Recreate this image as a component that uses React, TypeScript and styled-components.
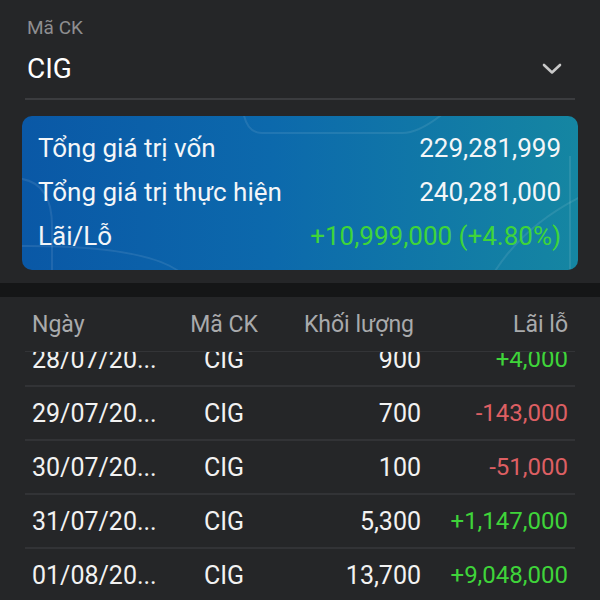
import styled, { createGlobalStyle } from 'styled-components';

const GlobalStyle = createGlobalStyle`
  html, body {
    margin: 0;
    padding: 0;
    background: #252628;
  }
  body {
    font-family: Roboto, "Noto Sans", "Liberation Sans", sans-serif;
    color: #ffffff;
  }
`;

interface Trade {
  date: string;
  code: string;
  volume: string;
  pnl: string;
}

const trades: Trade[] = [
  { date: '28/07/20...', code: 'CIG', volume: '900', pnl: '+4,000' },
  { date: '29/07/20...', code: 'CIG', volume: '700', pnl: '-143,000' },
  { date: '30/07/20...', code: 'CIG', volume: '100', pnl: '-51,000' },
  { date: '31/07/20...', code: 'CIG', volume: '5,300', pnl: '+1,147,000' },
  { date: '01/08/20...', code: 'CIG', volume: '13,700', pnl: '+9,048,000' },
];

const ChevronDown = () => (
  <svg width="20" height="12" viewBox="0 0 20 12" fill="none">
    <path
      d="M2 2 L10 9.5 L18 2"
      stroke="#c9c9c9"
      strokeWidth="2.6"
      strokeLinecap="round"
      strokeLinejoin="round"
    />
  </svg>
);

const CardPattern = () => (
  <PatternSvg viewBox="0 0 556 154" preserveAspectRatio="none">
    <g stroke="rgba(255,255,255,0.09)" strokeWidth="2" fill="none">
      <path d="M220 -20 Q220 17 240 17 L380 17 Q400 17 430 -10" />
      <path d="M-10 62 Q30 62 30 110 L30 170" />
      <path d="M-10 130 Q150 128 170 170" />
      <path d="M548 40 L548 170" />
      <path d="M470 160 Q500 110 560 80" />
    </g>
  </PatternSvg>
);

const App = () => {
  return (
    <>
      <GlobalStyle />
      <Page>
        <Picker>
          <PickerLabel>Mã CK</PickerLabel>
          <PickerRow>
            <PickerValue>CIG</PickerValue>
            <ChevronDown />
          </PickerRow>
        </Picker>

        <SummaryCard>
          <CardPattern />
          <SummaryRow>
            <span>Tổng giá trị vốn</span>
            <span>229,281,999</span>
          </SummaryRow>
          <SummaryRow>
            <span>Tổng giá trị thực hiện</span>
            <span>240,281,000</span>
          </SummaryRow>
          <SummaryRow>
            <span>Lãi/Lỗ</span>
            <Profit positive>+10,999,000 (+4.80%)</Profit>
          </SummaryRow>
        </SummaryCard>

        <Band />

        <Table>
          <HeadRow>
            <HeadCell align="left">Ngày</HeadCell>
            <HeadCell align="center">Mã CK</HeadCell>
            <HeadCell align="right" pr={7}>Khối lượng</HeadCell>
            <HeadCell align="right">Lãi lỗ</HeadCell>
          </HeadRow>
          <TableBody>
            <Rows>
              {trades.map((t) => (
                <Row key={t.date}>
                  <Cell align="left">{t.date}</Cell>
                  <Cell align="center">{t.code}</Cell>
                  <Cell align="right">{t.volume}</Cell>
                  <RowProfit positive={t.pnl.startsWith('+')}>{t.pnl}</RowProfit>
                </Row>
              ))}
            </Rows>
          </TableBody>
        </Table>
      </Page>
    </>
  );
};

const Page = styled.div`
  width: 600px;
  height: 600px;
  overflow: hidden;
  display: flex;
  flex-direction: column;
  background: #252628;
`;

const Picker = styled.div`
  margin: 0 25px;
  padding-top: 17px;
  border-bottom: 2px solid #3b3c3f;
`;

const PickerLabel = styled.div`
  font-size: 19px;
  line-height: 22px;
  padding-left: 2px;
  color: #8e8e90;
`;

const PickerRow = styled.div`
  display: flex;
  align-items: center;
  justify-content: space-between;
  box-sizing: border-box;
  height: 59px;
  padding: 0 13px 0 2px;
`;

const PickerValue = styled.div`
  font-size: 28px;
  color: #ffffff;
`;

const SummaryCard = styled.div`
  position: relative;
  overflow: hidden;
  margin: 16px 22px 0;
  height: 154px;
  box-sizing: border-box;
  padding: 10px 17px 12px 16px;
  border-radius: 10px;
  background: linear-gradient(90deg, #0a58a6 0%, #0c69ac 45%, #1586a2 100%);
`;

const PatternSvg = styled.svg`
  position: absolute;
  inset: 0;
  width: 100%;
  height: 100%;
  pointer-events: none;
`;

const SummaryRow = styled.div`
  position: relative;
  display: flex;
  justify-content: space-between;
  align-items: center;
  height: 44px;
  font-size: 26px;
  color: #f4f6f8;
`;

const Profit = styled.span<{ positive?: boolean }>`
  color: ${(p) => (p.positive ? '#3fd43a' : '#dd5f63')};
  text-align: right;
`;

const RowProfit = styled(Profit).attrs({ as: 'div' })`
  font-size: 24px;
`;

const Band = styled.div`
  margin-top: 13px;
  height: 14px;
  background: #151617;
`;

const Table = styled.div`
  flex: 1;
  display: flex;
  flex-direction: column;
  min-height: 0;
`;

const columns = '152px 80px 157px 1fr';

const HeadRow = styled.div`
  display: grid;
  grid-template-columns: ${columns};
  align-items: center;
  height: 54px;
  margin: 0 25px;
  padding: 0 7px;
  border-bottom: 1px solid #333437;
`;

const HeadCell = styled.div<{ align: string; pr?: number }>`
  font-size: 23px;
  color: #a9aaac;
  text-align: ${(p) => p.align};
  padding-right: ${(p) => p.pr ?? 0}px;
`;

const TableBody = styled.div`
  flex: 1;
  overflow: hidden;
`;

const Rows = styled.div`
  margin-top: -19px;
`;

const Row = styled.div`
  display: grid;
  grid-template-columns: ${columns};
  align-items: center;
  height: 52px;
  margin: 0 25px;
  padding: 0 7px;
  border-bottom: 2px solid #323336;
  font-size: 25px;
  color: #f2f2f2;
  white-space: nowrap;
`;

const Cell = styled.div<{ align: string }>`
  text-align: ${(p) => p.align};
`;

export default App;
